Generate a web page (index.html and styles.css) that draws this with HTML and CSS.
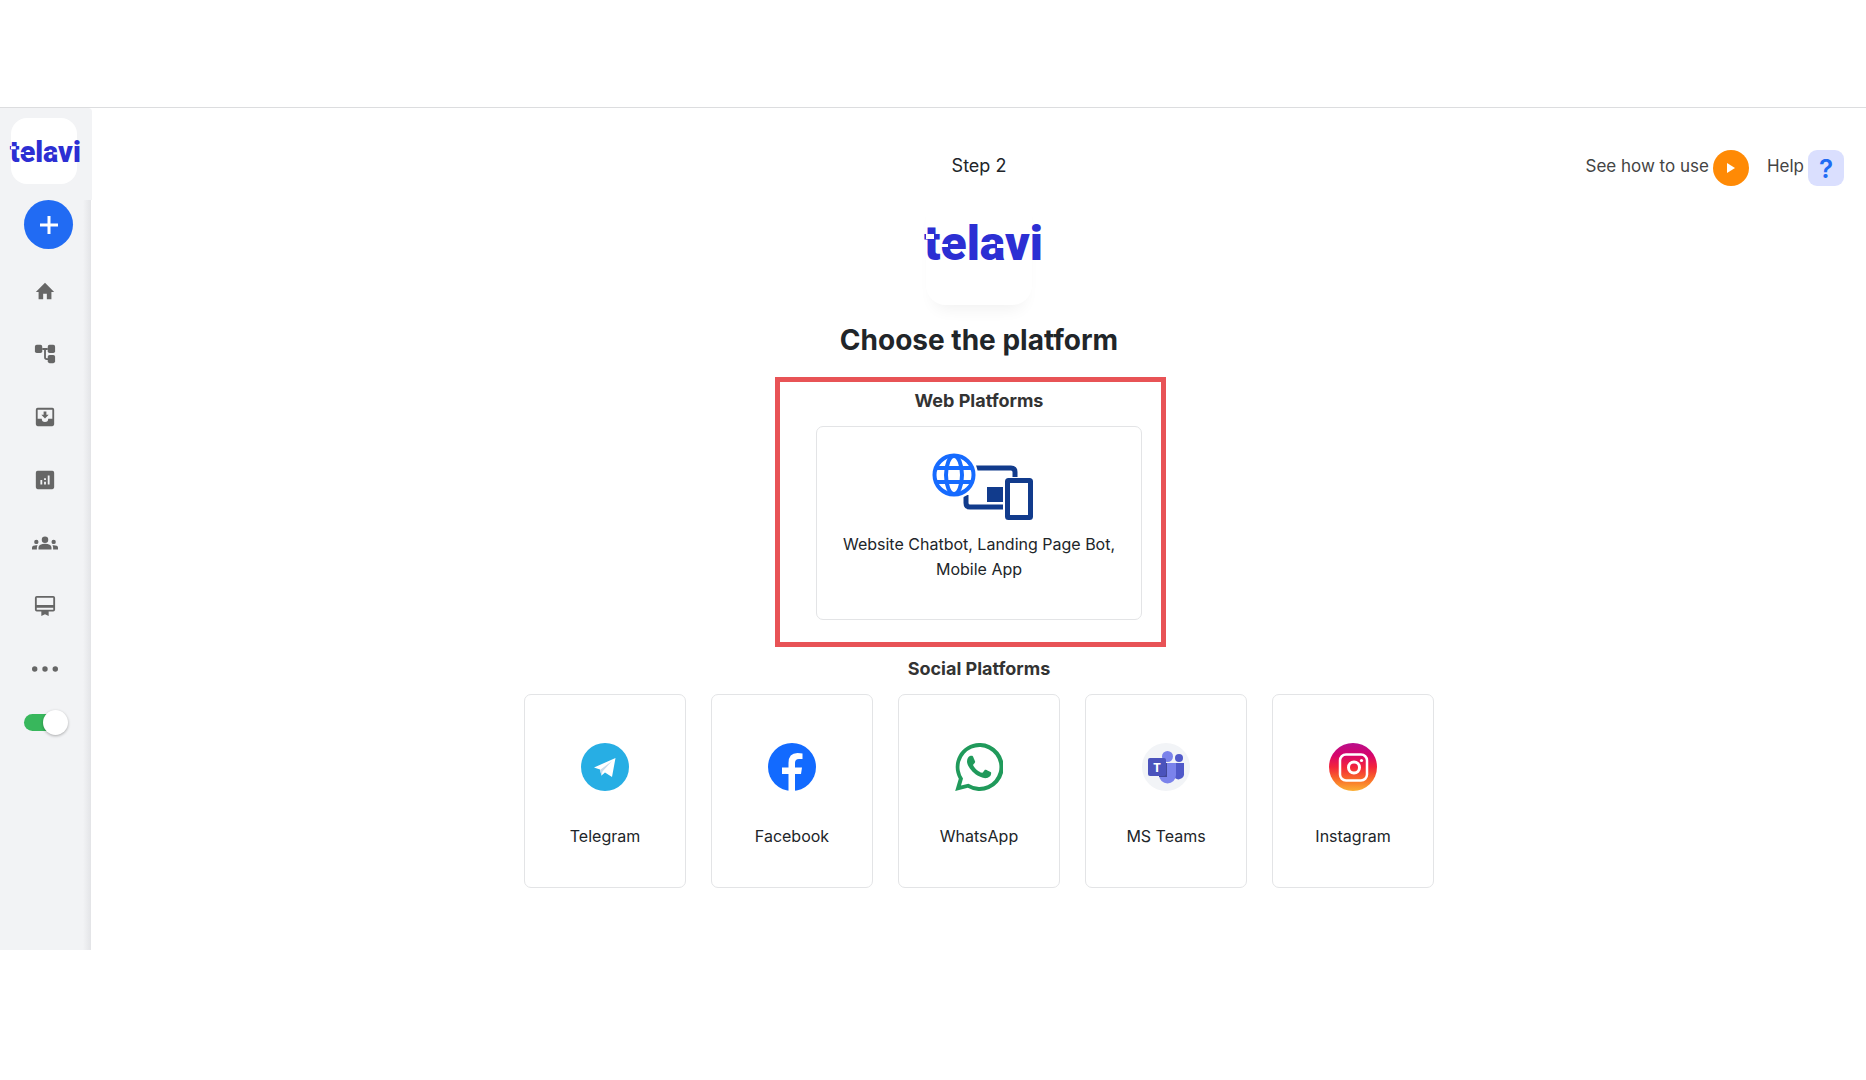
FILE: index.html
```html
<!DOCTYPE html>
<html lang="en">
<head>
    <meta charset="UTF-8">
    <meta name="viewport" content="width=device-width, initial-scale=1.0">
    <title>Telavi - Choose the platform</title>
    <link rel="stylesheet" href="styles.css">
</head>
<body>
    <header class="top-strip"></header>

    <div class="app">
        <aside class="sidebar">
            <div class="brand">
                <a href="#" class="brand-tile" aria-label="Telavi">
                    <svg class="logo logo-small" viewBox="0 0 114 40">
                        <text x="-2" y="38" class="logo-text">telavi</text>
                        <path d="M0 12h8v5H0zM14 22h8v3h-8zM71 22h7v4h-7z" fill="#fff"/>
                    </svg>
                </a>
            </div>
            <div class="sidebar-body">
                <button class="add-button" aria-label="Create bot">
                    <svg width="18" height="18" viewBox="0 0 18 18"><path d="M9 0v18M0 9h18" stroke="#fff" stroke-width="3"/></svg>
                </button>
                <nav class="nav">
                    <a href="#" aria-label="Home"><svg viewBox="0 0 24 24"><path d="M10 21v-6h4v6h5v-8h3L12 3 2 13h3v8z"/></svg></a>
                    <a href="#" aria-label="Flows"><svg viewBox="0 0 24 24"><rect x="1" y="2" width="8" height="9" rx="2"/><rect x="15" y="2" width="8" height="9" rx="2"/><rect x="15" y="13" width="8" height="9" rx="2"/><path d="M9 6.500h6M12 6.500v9q0 2 2 2h2" fill="none" stroke="#666" stroke-width="2"/></svg></a>
                    <a href="#" aria-label="Inbox"><svg viewBox="0 0 24 24"><path fill-rule="evenodd" d="M20 2H4a2 2 0 0 0-2 2v16a2 2 0 0 0 2 2h16a2 2 0 0 0 2-2V4a2 2 0 0 0-2-2zm0 12h-4.500a3.500 3.500 0 0 1-7 0H4V4h16z"/><path d="M16 9.500h-2.500V6h-3v3.500H8l4 4z"/></svg></a>
                    <a href="#" aria-label="Analytics"><svg viewBox="0 0 24 24"><path d="M20 2H4a2 2 0 0 0-2 2v16a2 2 0 0 0 2 2h16a2 2 0 0 0 2-2V4a2 2 0 0 0-2-2zM9 17H7v-5h2zm4 0h-2v-3h2zm0-5h-2v-2h2zm4 5h-2V7h2z"/></svg></a>
                    <a href="#" aria-label="Team"><svg class="wide" viewBox="0 0 24 24"><path d="M12 12.750c1.630 0 3.070.39 4.240.9 1.080.48 1.760 1.560 1.760 2.730V18H6v-1.610c0-1.180.68-2.260 1.760-2.730 1.170-.52 2.610-.91 4.240-.91zM4 13a2 2 0 1 0 0-4 2 2 0 0 0 0 4zm1.130 1.100A7 7 0 0 0 4 14c-.99 0-1.930.21-2.780.58A2 2 0 0 0 0 16.430V18h4.500v-1.610c0-.83.23-1.610.63-2.290zM20 13a2 2 0 1 0 0-4 2 2 0 0 0 0 4zm4 3.430c0-.81-.48-1.530-1.220-1.850A7 7 0 0 0 20 14c-.39 0-.76.04-1.130.1.400.68.630 1.460.630 2.290V18H24zM12 6a3 3 0 1 1 0 6 3 3 0 0 1 0-6z"/></svg></a>
                    <a href="#" aria-label="Plans"><svg viewBox="0 0 24 24"><path fill-rule="evenodd" d="M21 1H3a2.200 2.200 0 0 0-2 2v13a2.200 2.200 0 0 0 2 2h5v5l4-2 4 2v-5h5a2.200 2.200 0 0 0 2-2V3a2.200 2.200 0 0 0-2-2zm0 15H3v-2h18zm0-5H3V3h18z"/></svg></a>
                    <a href="#" aria-label="More"><svg class="wide" viewBox="0 0 24 24"><circle cx="2.500" cy="12" r="2.500"/><circle cx="12" cy="12" r="2.500"/><circle cx="21.500" cy="12" r="2.500"/></svg></a>
                </nav>
                <input type="checkbox" class="toggle" aria-label="Switch theme" checked>
            </div>
        </aside>

        <main class="main">
            <div class="toolbar">
                <div class="step">Step 2</div>
                <div class="toolbar-links">
                    <a href="#">See how to use
                        <span class="play"><svg width="8" height="10" viewBox="0 0 8 10"><path d="M0 0l8 5-8 5z" fill="#fff"/></svg></span>
                    </a>
                    <a href="#">Help
                        <span class="help">?</span>
                    </a>
                </div>
            </div>

            <div class="logo-tile">
                <svg class="logo logo-large" viewBox="0 0 114 40">
                    <text x="-2" y="38" class="logo-text">telavi</text>
                    <path d="M0 12h8v5H0zM14 22h8v3h-8zM71 22h7v4h-7z" fill="#fff"/>
                </svg>
            </div>
            <h1>Choose the platform</h1>

            <section class="web-platforms">
                <h2>Web Platforms</h2>
                <button class="card web-card">
                    <svg width="102" height="68" viewBox="-4 0 102 68">
                        <g fill="none" stroke="#113b8c" stroke-width="5">
                            <path d="M44 15h35q4 0 4 4v5M34 42v8q0 4 4 4h33"/>
                            <rect x="75.500" y="27.500" width="23" height="37" rx="1"/>
                        </g>
                        <path d="M55 34h16v15H55z" fill="#113b8c"/>
                        <circle cx="22" cy="22" r="24" fill="#fff"/>
                        <g fill="none" stroke="#166bff" stroke-width="4">
                            <circle cx="22" cy="22" r="19.500"/>
                            <ellipse cx="22" cy="22" rx="8" ry="19"/>
                            <path d="M4 15h36M4 29h36"/>
                        </g>
                    </svg>
                    <span>Website Chatbot, Landing Page Bot, Mobile App</span>
                </button>
            </section>

            <section class="social-platforms">
                <h2>Social Platforms</h2>
                <div class="card-row">
                    <button class="card">
                        <svg width="48" height="48" viewBox="0 0 48 48">
                            <circle cx="24" cy="24" r="24" fill="#27aee4"/>
                            <path d="M13 24.500L34.500 15 31 34l-7-4.500-3.500 3-1.500-6z" fill="#fff"/>
                            <path d="M19 27l1.500 6 1-4.500L31 18z" fill="#c9dcec"/>
                        </svg>
                        <span>Telegram</span>
                    </button>
                    <button class="card">
                        <svg width="48" height="48" viewBox="0 0 48 48">
                            <circle cx="24" cy="24" r="24" fill="#126aff"/>
                            <path d="M20.500 48V31H14v-6.500h6.500v-4.500q0-10 9-10 3 0 5 .5V16h-3.500q-4 0-4 4v4.500h7l-1 6.500h-6v17z" fill="#fff"/>
                        </svg>
                        <span>Facebook</span>
                    </button>
                    <button class="card">
                        <svg width="48" height="48" viewBox="0 0 24 24" fill="#209a5b">
                            <path d="M17.472 14.382c-.297-.149-1.758-.867-2.030-.967-.273-.099-.471-.148-.670.150-.197.297-.767.966-.940 1.164-.173.199-.347.223-.644.075-.297-.150-1.255-.463-2.390-1.475-.883-.788-1.480-1.761-1.653-2.059-.173-.297-.018-.458.130-.606.134-.133.298-.347.446-.520.149-.174.198-.298.298-.497.099-.198.050-.371-.025-.520-.075-.149-.669-1.612-.916-2.207-.242-.579-.487-.500-.669-.510-.173-.008-.371-.010-.570-.010-.198 0-.520.074-.792.372-.272.297-1.040 1.016-1.040 2.479 0 1.462 1.065 2.875 1.213 3.074.149.198 2.096 3.200 5.077 4.487.709.306 1.262.489 1.694.625.712.227 1.360.195 1.871.118.571-.085 1.758-.719 2.006-1.413.248-.694.248-1.289.173-1.413-.074-.124-.272-.198-.570-.347z"/>
                            <path d="M12 0A12 12 0 0 0 1.900 17.900L.1 24l6.300-1.600A12 12 0 1 0 12 0zm0 22a10 10 0 0 1-5.300-1.600L3 21.200l1-3.500A10 10 0 1 1 12 22z"/>
                        </svg>
                        <span>WhatsApp</span>
                    </button>
                    <button class="card">
                        <svg width="48" height="48" viewBox="0 0 48 48">
                            <circle cx="24" cy="24" r="24" fill="#f2f4f7"/>
                            <circle cx="37" cy="15" r="4" fill="#5059c9"/>
                            <path d="M31 20h11v10a5.500 5.500 0 0 1-9 5z" fill="#5059c9"/>
                            <circle cx="25.500" cy="13.500" r="5.500" fill="#7b83eb"/>
                            <path d="M17 20h17v12a8.500 8.500 0 0 1-17 0z" fill="#7b83eb"/>
                            <path d="M17 20h8v14h-8z" fill="#424899"/>
                            <rect x="6" y="15" width="18" height="18" rx="2" fill="#4b53bc"/>
                            <text x="15" y="29" text-anchor="middle" class="teams-letter">T</text>
                        </svg>
                        <span>MS Teams</span>
                    </button>
                    <button class="card">
                        <svg width="48" height="48" viewBox="0 0 48 48">
                            <defs>
                                <linearGradient id="insta" x1="0" y1="0" x2="0" y2="1">
                                    <stop offset="0" stop-color="#b80f8c"/>
                                    <stop offset=".25" stop-color="#d6046c"/>
                                    <stop offset=".5" stop-color="#f3243c"/>
                                    <stop offset=".75" stop-color="#f96a28"/>
                                    <stop offset="1" stop-color="#fbb034"/>
                                </linearGradient>
                            </defs>
                            <circle cx="24" cy="24" r="24" fill="url(#insta)"/>
                            <g fill="none" stroke="#fff" stroke-width="2.500">
                                <rect x="11" y="11.500" width="27" height="26" rx="6"/>
                                <circle cx="25" cy="24.500" r="5.500" stroke-width="3"/>
                            </g>
                            <circle cx="32.500" cy="17.500" r="1.600" fill="#fff"/>
                        </svg>
                        <span>Instagram</span>
                    </button>
                </div>
            </section>
        </main>
    </div>
</body>
</html>
```
FILE: styles.css
```css
* {
    box-sizing: border-box;
}

body {
    margin: 0;
    background-color: #ffffff;
    color: #212529;
    font-family: 'Inter', 'Liberation Sans', sans-serif;
    font-size: 16px;
}

a {
    color: inherit;
    text-decoration: none;
}

button {
    font-family: inherit;
    font-size: inherit;
    color: inherit;
    cursor: pointer;
}

svg {
    display: block;
}

.logo {
    flex-shrink: 0;
    overflow: visible;
}

.logo-text {
    font-family: 'Roboto', sans-serif;
    font-size: 48px;
    font-weight: 900;
    fill: #2c2fd3;
}

.logo-small {
    width: 68px;
    height: 24px;
}

.logo-large {
    width: 114px;
    height: 40px;
}

.top-strip {
    height: 108px;
    border-bottom: 1px solid #dcdddf;
}

.app {
    display: flex;
    align-items: flex-start;
}

/* Sidebar */

.sidebar {
    width: 92px;
    flex-shrink: 0;
}

.brand {
    height: 92px;
    padding: 10px 11px;
    background-color: #f2f3f5;
    border-radius: 0 4px 0 0;
}

.brand-tile {
    display: flex;
    align-items: center;
    width: 66px;
    height: 66px;
    background-color: #ffffff;
    border-radius: 16px;
}

.sidebar-body {
    width: 91px;
    padding-bottom: 219px;
    background: linear-gradient(to left, #e3e4e7, #f2f3f5 8px);
}

.add-button {
    display: flex;
    align-items: center;
    justify-content: center;
    width: 49px;
    height: 49px;
    margin: 0 24px 10px;
    padding: 0;
    border: none;
    border-radius: 50%;
    background-color: #216bf3;
}

.nav {
    width: 90px;
}

.nav a {
    display: flex;
    align-items: center;
    justify-content: center;
    height: 63px;
}

.nav svg {
    width: 22px;
    height: 22px;
    fill: #666666;
}

.nav .wide {
    width: 26px;
    height: 26px;
}

.toggle {
    appearance: none;
    display: block;
    position: relative;
    width: 42px;
    height: 17px;
    margin: 14px 24px 0;
    border-radius: 9px;
    background-color: #38b75c;
    cursor: pointer;
}

.toggle::before {
    content: '';
    position: absolute;
    top: -4px;
    right: -2px;
    width: 25px;
    height: 25px;
    border-radius: 50%;
    background-color: #ffffff;
    box-shadow: 0 1px 3px rgba(0, 0, 0, 0.3);
}

/* Main area */

.main {
    flex: 1;
    display: flex;
    flex-direction: column;
    align-items: center;
    padding: 42px 22px;
}

.toolbar {
    display: grid;
    grid-template-columns: 1fr auto 1fr;
    width: 100%;
    height: 36px;
}

.step {
    grid-column: 2;
    font-size: 18px;
    line-height: 32px;
}

.toolbar-links {
    display: flex;
    justify-content: flex-end;
    gap: 18px;
    font-size: 17px;
    line-height: 33px;
    color: #444444;
}

.toolbar-links a {
    display: flex;
    gap: 4px;
}

.play,
.help {
    display: flex;
    align-items: center;
    justify-content: center;
    width: 36px;
    height: 36px;
}

.play {
    border-radius: 50%;
    background-color: #ff8a05;
}

.help {
    border-radius: 9px;
    background-color: #dadffe;
    color: #216bf3;
    font-size: 26px;
    font-weight: 600;
}

.logo-tile {
    width: 106px;
    height: 112px;
    margin-top: 7px;
    padding-top: 29px;
    border-radius: 20px;
    box-shadow: 0 12px 16px -8px rgba(0, 0, 0, 0.06);
}

h1 {
    margin: 17px 0 31px;
    font-size: 28px;
    line-height: 36px;
    font-weight: 700;
}

h2 {
    margin: 0 0 13px;
    font-size: 18px;
    line-height: 24px;
    font-weight: 700;
    text-align: center;
    color: #333333;
}

.card {
    display: flex;
    flex-direction: column;
    align-items: center;
    width: 162px;
    height: 194px;
    padding: 48px 16px 0;
    border: 1px solid #e3e4e6;
    border-radius: 7px;
    background-color: #ffffff;
    font-size: 16px;
    line-height: 25px;
    gap: 33px;
}

.web-card {
    width: 326px;
    padding-top: 26px;
    gap: 11px;
}

.web-platforms {
    position: relative;
}

.web-platforms::after {
    content: '';
    position: absolute;
    inset: -12px -24px -27px -41px;
    border: 5px solid #e85356;
    pointer-events: none;
}

.web-card svg {
    overflow: visible;
}

.social-platforms {
    margin-top: 37px;
}

.card-row {
    display: flex;
    flex-wrap: wrap;
    justify-content: center;
    gap: 25px;
}

.teams-letter {
    font-family: 'Open Sans', sans-serif;
    font-size: 13px;
    font-weight: 700;
    fill: #ffffff;
}
```
